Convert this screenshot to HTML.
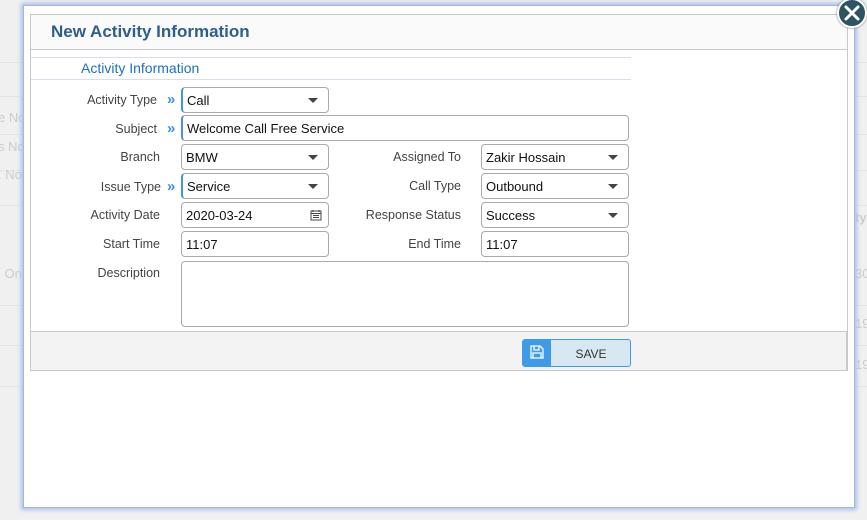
<!DOCTYPE html>
<html><head><style>
*{box-sizing:border-box}
body{margin:0;width:867px;height:520px;background:#f0f0f0;font-family:"Liberation Sans",sans-serif;position:relative;overflow:hidden}
.bgt{position:absolute;color:#ccc;font-size:13px}
.hl{position:absolute;left:0;width:867px;height:1px;background:#e4e4e4}
.modal{position:absolute;left:23px;top:5px;width:832px;height:503px;background:#fff;border:1px solid #a9b8d8;box-shadow:0 0 4px 2px #a8c0f0}
.panel{position:absolute;left:6px;top:8px;width:818px;height:357px;border:1px solid #c8c8c8}
.hdr{position:absolute;left:0;top:0;width:816px;height:35px;background:#fafafa;border-bottom:1px solid #c8c8c8}
.hdr span{position:absolute;left:20px;top:7px;font-size:17px;font-weight:bold;color:#2f5d8c}
.sec{position:absolute;left:0;top:42px;width:600px;height:23px;border-top:1px solid #dcdcec;border-bottom:1px solid #dcdcec}
.sec span{position:absolute;left:50px;top:2px;font-size:14px;color:#1d6fc0}
.lbl{position:absolute;font-size:12.5px;color:#444;text-align:right}
.arr{position:absolute;color:#3a8ee6;font-size:15px;font-weight:bold;line-height:15px}
.in{position:absolute;height:26px;border:1px solid #aaa;border-radius:4px;font-size:13px;color:#111;padding:5px 4px;background:#fff}
.in.f{border-left:2px solid #4a90e2}
.dd:after{content:"";position:absolute;right:10px;top:10px;border-left:5px solid transparent;border-right:5px solid transparent;border-top:5px solid #444}
.close{position:absolute;left:837px;top:-2px;width:30px;height:30px;border-radius:50%;background:#2e5462;border:2px solid #fff;box-shadow:0 0 2px #666}
</style></head><body>
<div class="hl" style="top:62px"></div><div class="hl" style="top:96px"></div><div class="hl" style="top:134px"></div><div class="hl" style="top:170px"></div><div class="hl" style="top:205px"></div><div class="hl" style="top:305px"></div><div class="hl" style="top:345px"></div><div class="hl" style="top:386px"></div>
<div class="bgt" style="left:-2px;top:110px">e No</div><div class="bgt" style="left:-2px;top:139px">s No</div><div class="bgt" style="left:-2px;top:167px">. No</div><div class="bgt" style="left:-2px;top:266px">l On</div>
<div class="bgt" style="left:855px;top:266px">30</div><div class="bgt" style="left:855px;top:316px">19</div><div class="bgt" style="left:855px;top:357px">19</div><div class="bgt" style="left:855px;top:210px;font-weight:bold">ty</div>
<div class="modal">
<div class="panel">
<div class="hdr"><span>New Activity Information</span></div>
<div class="sec"><span>Activity Information</span></div>
</div>
</div>
<div style="position:absolute;left:0;top:0">
<div class="lbl" style="left:60px;top:93px;width:97px">Activity Type</div><div class="arr" style="left:167px;top:92px">»</div>
<div class="in f dd" style="left:181px;top:87px;width:148px">Call</div>
<div class="lbl" style="left:60px;top:122px;width:97px">Subject</div><div class="arr" style="left:167px;top:121px">»</div>
<div class="in f" style="left:181px;top:115px;width:448px">Welcome Call Free Service</div>
<div class="lbl" style="left:60px;top:150px;width:100px">Branch</div>
<div class="in dd" style="left:181px;top:144px;width:148px">BMW</div>
<div class="lbl" style="left:340px;top:150px;width:121px">Assigned To</div>
<div class="in dd" style="left:481px;top:144px;width:148px">Zakir Hossain</div>
<div class="lbl" style="left:60px;top:180px;width:101px">Issue Type</div><div class="arr" style="left:167px;top:179px">»</div>
<div class="in f dd" style="left:181px;top:173px;width:148px">Service</div>
<div class="lbl" style="left:340px;top:179px;width:121px">Call Type</div>
<div class="in dd" style="left:481px;top:173px;width:148px">Outbound</div>
<div class="lbl" style="left:60px;top:208px;width:100px">Activity Date</div>
<div class="in" style="left:181px;top:202px;width:148px">2020-03-24<svg width="12" height="12" viewBox="0 0 12 12" style="position:absolute;right:6px;top:6px"><rect x="1" y="2" width="10" height="9" fill="none" stroke="#444"/><path d="M3 1v2M9 1v2M1 4.5h10M3 6.5h6M3 8.5h6" stroke="#444"/></svg></div>
<div class="lbl" style="left:340px;top:208px;width:121px">Response Status</div>
<div class="in dd" style="left:481px;top:202px;width:148px">Success</div>
<div class="lbl" style="left:60px;top:237px;width:100px">Start Time</div>
<div class="in" style="left:181px;top:231px;width:148px">11:07</div>
<div class="lbl" style="left:340px;top:237px;width:121px">End Time</div>
<div class="in" style="left:481px;top:231px;width:148px">11:07</div>
<div class="lbl" style="left:60px;top:266px;width:100px">Description</div>
<div class="in" style="left:181px;top:261px;width:448px;height:66px"></div>
</div>
<div style="left:30px;top:331px;width:817px;height:40px;border:1px solid #c8c8c8;border-top:1px solid #c8c8c8;background:#f3f3f3;position:absolute"></div>
<div style="position:absolute;left:522px;top:339px;width:109px;height:28px;border:1px solid #3d9be9;border-radius:3px;background:#d8e8f2;overflow:hidden">
<div style="position:absolute;left:0;top:0;width:28px;height:28px;background:#3d9be9">
<svg width="14" height="14" viewBox="0 0 14 14" style="position:absolute;left:7px;top:5px"><path d="M1 1h9l3 3v9H1z M4 1v4h5V1 M3 13V8h8v5" fill="none" stroke="#fff" stroke-width="1.3"/></svg></div>
<div style="position:absolute;left:28px;top:7px;width:80px;text-align:center;font-size:12px;color:#333">SAVE</div>
</div>
<div class="close"><svg width="26" height="26" viewBox="0 0 26 26"><path d="M7 7L19 19M19 7L7 19" stroke="#fff" stroke-width="3" stroke-linecap="round"/></svg></div>
</body></html>
